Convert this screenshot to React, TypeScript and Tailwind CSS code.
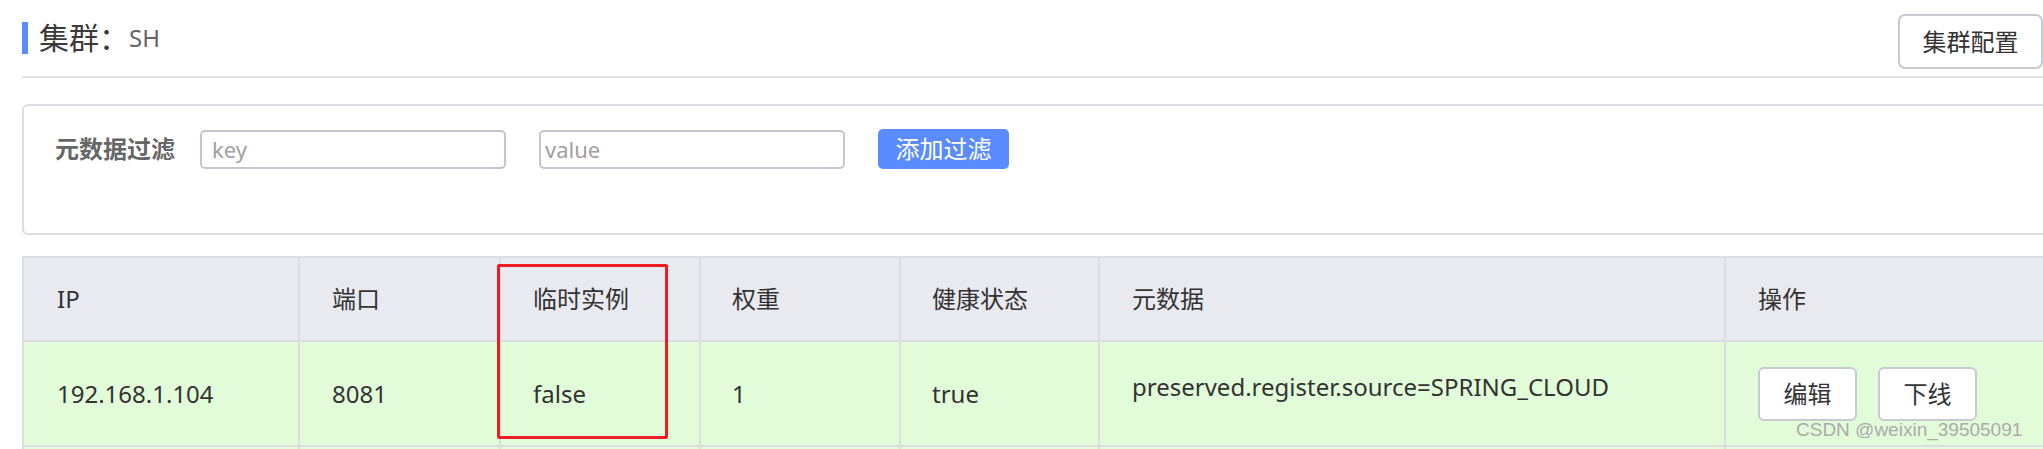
const columns = [
  { title: 'IP', width: 'w-[276px]', pad: 'pl-[33px]' },
  { title: '端口', width: 'w-[201px]', pad: 'pl-[32px]' },
  { title: '临时实例', width: 'w-[200px]', pad: 'pl-[32px]' },
  { title: '权重', width: 'w-[200px]', pad: 'pl-[31px]' },
  { title: '健康状态', width: 'w-[199px]', pad: 'pl-[31px]' },
  { title: '元数据', width: 'w-[626px]', pad: 'pl-[32px]' },
  { title: '操作', width: 'w-[400px]', pad: 'pl-[32px]' },
];

const instance = {
  ip: '192.168.1.104',
  port: '8081',
  ephemeral: 'false',
  weight: '1',
  healthy: 'true',
  metadata: 'preserved.register.source=SPRING_CLOUD',
};

function OutlineButton({ label }: { label: string }) {
  return (
    <button className="h-[54px] w-[99px] rounded-[6px] border-2 border-[#c8cad2] bg-white text-[24px] text-[#333]">
      {label}
    </button>
  );
}

export default function App() {
  return (
    <div className="relative h-[449px] w-[2043px] overflow-hidden bg-white font-['Noto_Sans','Noto_Sans_CJK_SC',sans-serif] text-[#333]">
      <div className="w-[2100px] pl-[22px]">
        {/* title bar */}
        <div className="flex h-[78px] w-[2021px] items-start justify-between border-b-2 border-[#e4e4e8]">
          <div className="flex items-center pt-[22px]">
            <span className="h-[32px] w-[6px] bg-[#5b8cff]" />
            <span className="ml-[11px] text-[30px] font-normal leading-[32px] text-[#3a3a3a]">集群：</span>
            <span className="text-[24px] leading-[32px] text-[#666]">SH</span>
          </div>
          <button className="mt-[14px] h-[55px] w-[145px] rounded-[7px] border-2 border-[#c8cad2] bg-white text-[24px] text-[#333]">
            集群配置
          </button>
        </div>

        {/* metadata filter */}
        <div className="mt-[26px] h-[131px] w-[2060px] rounded-[6px] border-2 border-[#dcdde3] pl-[31px] pt-[23px]">
          <div className="flex items-center">
            <span className="text-[24px] font-bold text-[#666]">元数据过滤</span>
            <input
              placeholder="key"
              className="ml-[25px] h-[39px] w-[306px] rounded-[5px] border-2 border-[#c4c6cf] px-[10px] text-[22px] outline-none placeholder:text-[#a0a0a0]"
            />
            <input
              placeholder="value"
              className="ml-[33px] h-[39px] w-[306px] rounded-[5px] border-2 border-[#c4c6cf] px-[4px] text-[22px] outline-none placeholder:text-[#a0a0a0]"
            />
            <button className="ml-[33px] h-[40px] w-[131px] rounded-[5px] bg-[#5a8cff] text-[24px] text-white">
              添加过滤
            </button>
          </div>
        </div>

        {/* instance table */}
        <div className="relative mt-[21px] w-[2100px] border-l-2 border-t-2 border-[#dcdde3]">
          <div className="flex h-[84px] border-b-2 border-[#dcdde3] bg-[#e9eaef]">
            {columns.map((c) => (
              <div
                key={c.title}
                className={`${c.width} ${c.pad} flex shrink-0 items-center border-r-2 border-[#dcdde3] text-[24px] text-[#333]`}
              >
                {c.title}
              </div>
            ))}
          </div>

          <div className="flex h-[105px] border-b-2 border-[#dcdde3] bg-[#e2fcd9] text-[24px] text-[#333]">
            <div className="flex w-[276px] shrink-0 items-center border-r-2 border-[#dcdde3] pl-[33px]">{instance.ip}</div>
            <div className="flex w-[201px] shrink-0 items-center border-r-2 border-[#dcdde3] pl-[32px]">{instance.port}</div>
            <div className="flex w-[200px] shrink-0 items-center border-r-2 border-[#dcdde3] pl-[32px]">{instance.ephemeral}</div>
            <div className="flex w-[200px] shrink-0 items-center border-r-2 border-[#dcdde3] pl-[31px]">{instance.weight}</div>
            <div className="flex w-[199px] shrink-0 items-center border-r-2 border-[#dcdde3] pl-[31px]">{instance.healthy}</div>
            <div className="flex w-[626px] shrink-0 items-center border-r-2 border-[#dcdde3] pb-[14px] pl-[32px]">{instance.metadata}</div>
            <div className="flex w-[400px] shrink-0 items-center gap-[21px] border-r-2 border-[#dcdde3] pl-[32px]">
              <OutlineButton label="编辑" />
              <OutlineButton label="下线" />
            </div>
          </div>

          {/* next row, only its top edge is in view */}
          <div className="flex h-[105px] bg-[#e2fcd9]">
            <div className="w-[276px] shrink-0 border-r-2 border-[#dcdde3]" />
            <div className="w-[201px] shrink-0 border-r-2 border-[#dcdde3]" />
            <div className="w-[200px] shrink-0 border-r-2 border-[#dcdde3]" />
            <div className="w-[200px] shrink-0 border-r-2 border-[#dcdde3]" />
            <div className="w-[199px] shrink-0 border-r-2 border-[#dcdde3]" />
            <div className="w-[626px] shrink-0 border-r-2 border-[#dcdde3]" />
            <div className="w-[400px] shrink-0 border-r-2 border-[#dcdde3]" />
          </div>

          {/* annotation box */}
          <div className="absolute left-[473px] top-[6px] h-[175px] w-[171px] rounded-[2px] border-[3px] border-[#ee1c24]" />
        </div>
      </div>

      <span className="absolute left-[1796px] top-[418px] font-['Liberation_Sans',sans-serif] text-[19px] leading-[24px] text-[#ababab]">
        CSDN @weixin_39505091
      </span>
    </div>
  );
}
